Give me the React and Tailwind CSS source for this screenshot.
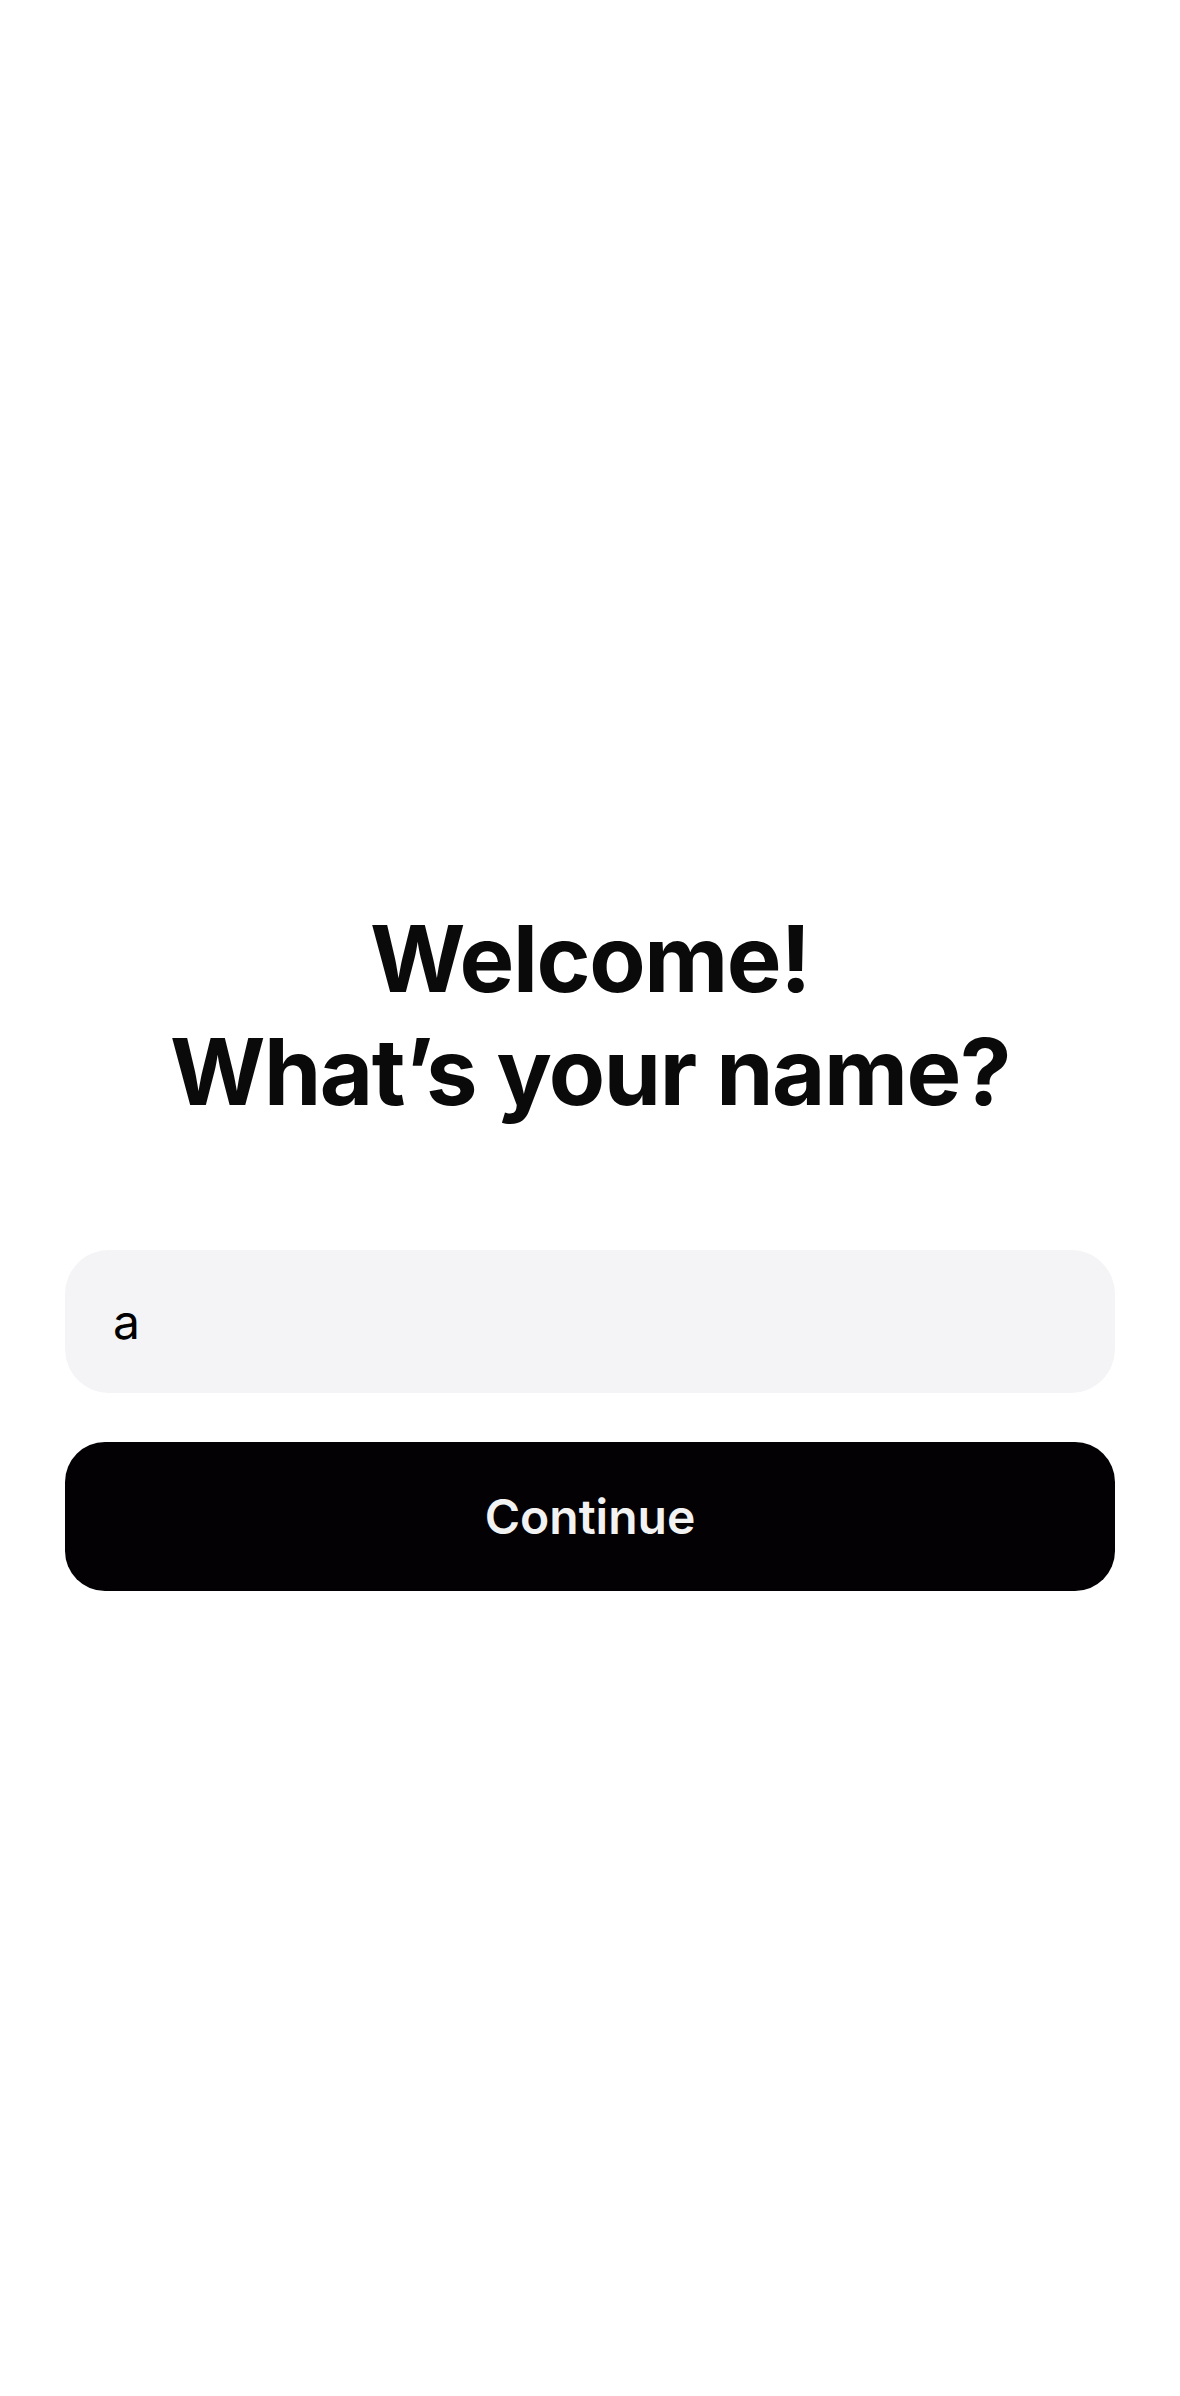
import { useState } from 'react';

export default function App() {
  const [name, setName] = useState('a');

  return (
    <div className="min-h-[2396px] bg-white px-[65px] pt-[902px] font-['Inter','Noto_Sans',sans-serif]">
      <h1 className="text-center text-[92px] leading-[113px] font-bold tracking-[-1.4px] text-[#0a0a0a]">
        Welcome!
        <br />
        What’s your name?
      </h1>

      <div className="mt-[122px] flex flex-col gap-[49px]">
        <input
          className="h-[143px] w-full rounded-[44px] bg-[#f4f4f6] px-[48px] text-[48px] text-black outline-none"
          value={name}
          onChange={(e) => setName(e.target.value)}
        />
        <button className="h-[149px] w-full rounded-[40px] bg-[#030104] text-[48px] font-semibold text-[#f2f2f2]">
          Continue
        </button>
      </div>
    </div>
  );
}
